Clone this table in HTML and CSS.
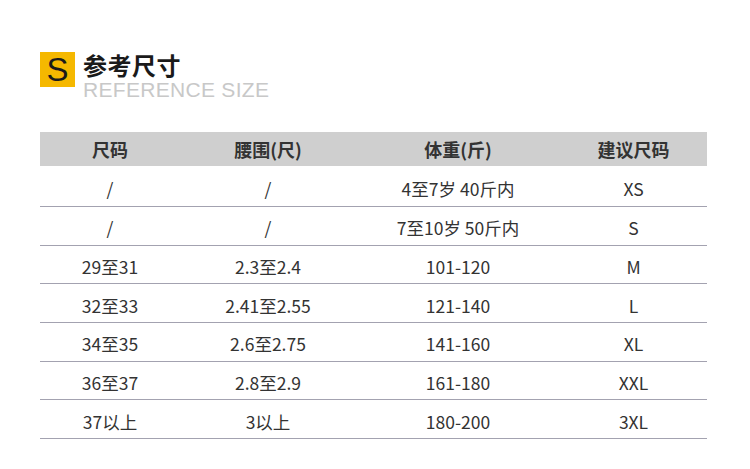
FILE: index.html
```html
<!DOCTYPE html>
<html lang="zh">
<head>
<meta charset="utf-8">
<link rel="stylesheet" href="styles.css">
</head>
<body>
<div class="page">
  <div class="title">
    <div class="badge">S</div>
    <div class="title-text">
      <div class="cn">参考尺寸</div>
      <div class="en">REFERENCE SIZE</div>
    </div>
  </div>
  <div class="table">
    <div class="row head">
      <div class="c1">尺码</div><div class="c2">腰围(尺)</div><div class="c3">体重(斤)</div><div class="c4">建议尺码</div>
    </div>
    <div class="row first">
      <div class="c1">/</div><div class="c2">/</div><div class="c3">4至7岁 40斤内</div><div class="c4">XS</div>
    </div>
    <div class="row">
      <div class="c1">/</div><div class="c2">/</div><div class="c3">7至10岁 50斤内</div><div class="c4">S</div>
    </div>
    <div class="row">
      <div class="c1">29至31</div><div class="c2">2.3至2.4</div><div class="c3">101-120</div><div class="c4">M</div>
    </div>
    <div class="row">
      <div class="c1">32至33</div><div class="c2">2.41至2.55</div><div class="c3">121-140</div><div class="c4">L</div>
    </div>
    <div class="row">
      <div class="c1">34至35</div><div class="c2">2.6至2.75</div><div class="c3">141-160</div><div class="c4">XL</div>
    </div>
    <div class="row">
      <div class="c1">36至37</div><div class="c2">2.8至2.9</div><div class="c3">161-180</div><div class="c4">XXL</div>
    </div>
    <div class="row">
      <div class="c1">37以上</div><div class="c2">3以上</div><div class="c3">180-200</div><div class="c4">3XL</div>
    </div>
  </div>
</div>
</body>
</html>
```
FILE: styles.css
```css
html, body {
  margin: 0;
  padding: 0;
  background: #ffffff;
}
body {
  font-family: "Noto Sans CJK SC", "Noto Sans", sans-serif;
  color: #333333;
}
.page {
  padding: 52px 43px 0 40px;
}
.title {
  display: flex;
  align-items: flex-start;
  height: 80px;
}
.badge {
  width: 35px;
  height: 35px;
  background: #f5b800;
  color: #1a1a1a;
  font-family: "Liberation Sans", sans-serif;
  font-size: 33px;
  line-height: 35px;
  text-align: center;
}
.title-text {
  margin-left: 8px;
  display: flex;
  flex-direction: column;
}
.cn {
  font-size: 24px;
  font-weight: 700;
  line-height: 26px;
  color: #1a1a1a;
  letter-spacing: 0.5px;
}
.en {
  font-family: "Liberation Sans", sans-serif;
  font-size: 21px;
  line-height: 24px;
  margin-top: 0;
  color: #c8c8c8;
  letter-spacing: 0.3px;
}
.table {
  width: 667px;
}
.row {
  box-sizing: border-box;
  display: grid;
  grid-template-columns: 140px 176px 204px 147px;
  height: 38.7px;
  align-items: center;
  text-align: center;
  font-size: 17.5px;
  border-bottom: 1px solid #a3a2b0;
  padding-top: 4px;
}
.row.head {
  background: #cfcfcf;
  height: 34px;
  border-bottom: none;
  padding-top: 0;
  font-weight: 700;
  font-size: 18px;
}
.row.first {
  height: 41px;
}
```
